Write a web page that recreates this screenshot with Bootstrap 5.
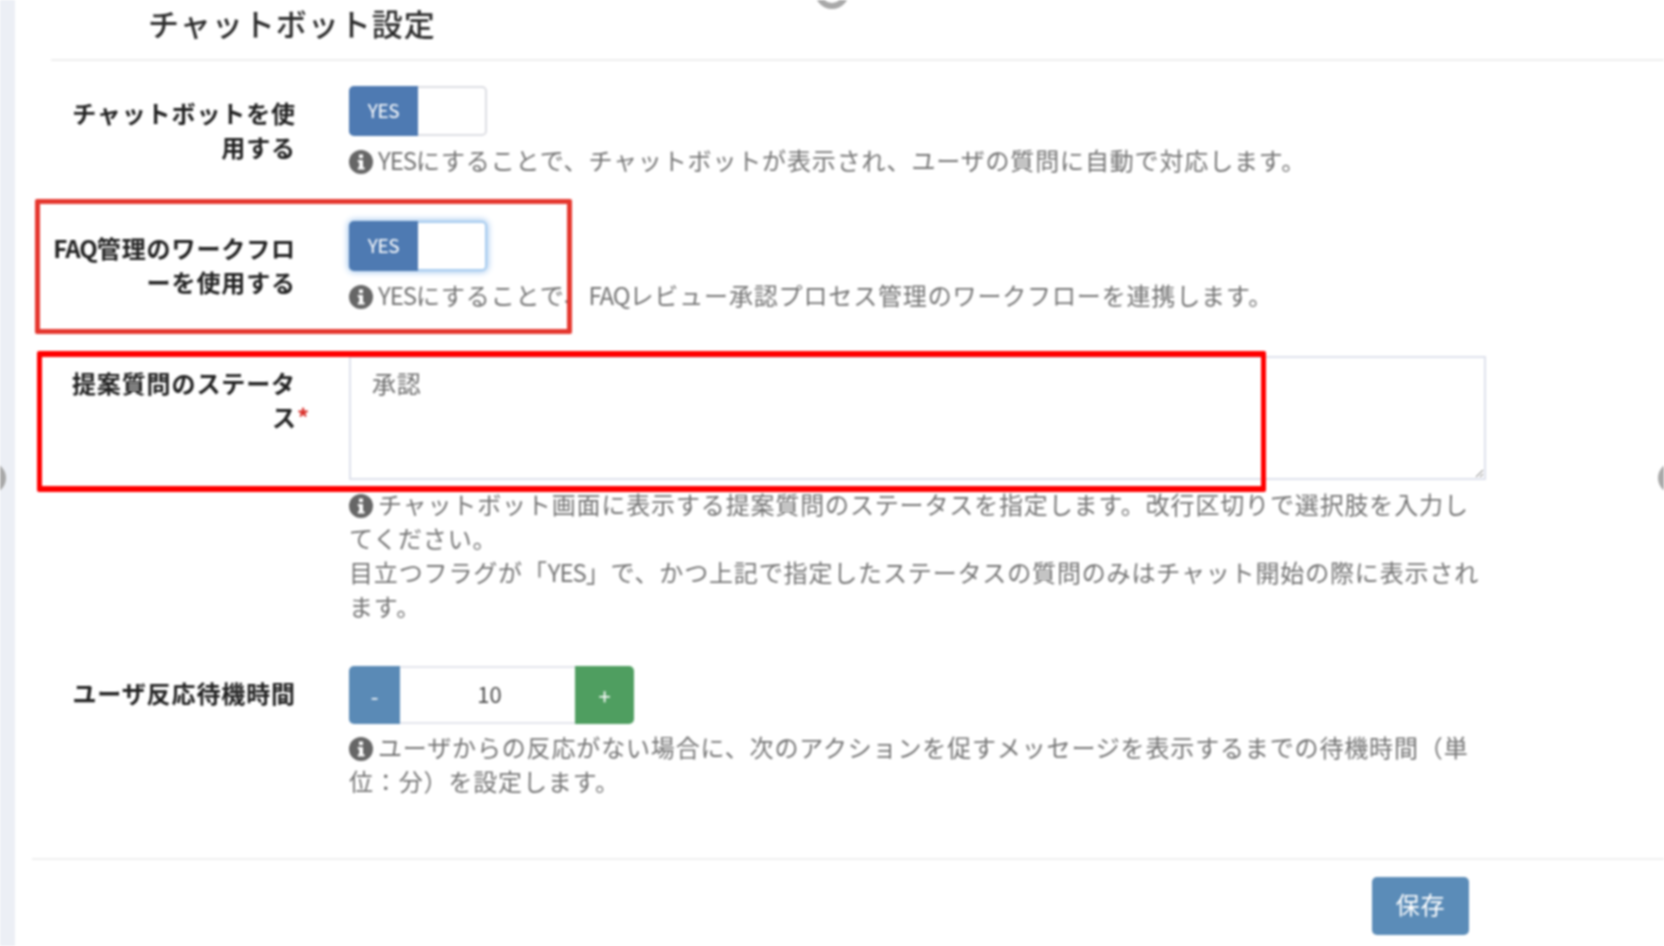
<!DOCTYPE html>
<html lang="ja">
<head>
<meta charset="utf-8">
<title>チャットボット設定</title>
<link href="https://cdn.jsdelivr.net/npm/bootstrap@5.3.0/dist/css/bootstrap.min.css" rel="stylesheet">
<style>
html,body{height:100%;overflow:hidden;background:#fff}
body{font-family:"Noto Sans CJK JP","Noto Sans",sans-serif;font-size:24px;line-height:34px;color:#333}
.stage{position:relative;width:1664px;height:946px;overflow:hidden;filter:blur(.9px);padding-left:15px;background:linear-gradient(90deg,#eceff5 15px,#fff 15px)}
.head-block{height:61px;margin-left:36px;border-bottom:2px solid #eeeeee;padding-left:97px;padding-top:6px}
.head-title{font-size:31px;line-height:34px;letter-spacing:1px;font-weight:500;color:#2c2c2c;margin:0}
.form-area{padding-top:25px}
.frow{margin-bottom:44px}
.frow-tight{margin-bottom:43px}
.flabel{flex:0 0 334px;width:334px;padding:10px 53px 0 0;text-align:right;font-weight:700;letter-spacing:.9px;margin:0;color:#222;white-space:nowrap}
.faq-latin{letter-spacing:-1px}
.req{color:#d9312c;display:inline-block;margin-right:-14px}
.fbody{flex:0 0 1137px;width:1137px}
.sw{width:138px;height:50px;border:2px solid #dddee3;border-radius:5px;background:#fff}
.sw-on{flex:0 0 69px;margin:-2px 0 -2px -2px;border-radius:5px 0 0 5px;background:#4e7ab2;color:#fff;font-size:19px;line-height:48px;text-align:center;letter-spacing:-.3px}
.sw-focus{box-shadow:0 0 6px 1px #9cc3ec;border-color:#a9cdf0}
.hint{color:#747474;letter-spacing:.85px;margin-top:7px}
.stepper + .hint{margin-top:6px}
.hint svg{width:24px;height:24px;vertical-align:-4px;margin-right:5px}
.lat{letter-spacing:-1.1px}
.qarea{display:block;width:1137px;height:124px;padding:8px 21px;border:2px solid #dfe2ec;border-radius:0;color:#6c6c6c;font-size:24px;line-height:34px;letter-spacing:.7px;font-family:inherit}
.qarea:focus{outline:0;box-shadow:none;border-color:#dfe2ec}
.stepper{width:285px;height:58px}
.stepper-btn{flex:0 0 51px;border:0;border-radius:5px 0 0 5px;color:#fff;font-size:22px;line-height:54px;padding:0;background:#5a8ab6}
.stepper-plus{flex:0 0 59px;border-radius:0 5px 5px 0;background:#4f9e60}
.stepper-val{flex:1 1 auto;border-top:2px solid #e4e5ec;border-bottom:2px solid #e4e5ec;color:#4c4c4c;text-align:center;font-size:22px;line-height:51px;padding-left:4px}
.foot-block{position:absolute;left:32px;right:0;top:858px;border-top:2px solid #f0f0f0;padding:17px 195px 0 0}
.save-btn{width:97px;height:58px;padding:0 0 4px;background:#5b8cb8;border:0;border-radius:5px;color:#fff;font-size:24px;letter-spacing:.7px;line-height:50px}
.redbox{position:absolute;pointer-events:none;border-radius:2px}
.redbox-a{left:35px;top:199px;width:537px;height:135px;border:5px solid #e5372f}
.redbox-b{left:37px;top:351px;width:1229px;height:141px;border:6px solid #f00;border-left-width:5px;border-right-width:5px}
.dot{position:absolute;width:32px;height:32px;border-radius:50%;background:#a8a8a8}
.dot-l{left:-26px;top:462px}
.dot-r{left:1658px;top:462px}
.dot-t{left:815px;top:-25px;width:34px;height:34px;background:transparent;border:6px solid #a8a8a8}
</style>
</head>
<body>
<div class="stage">
  <div class="head-block"><h4 class="head-title">チャットボット設定</h4></div>
  <form class="form-area">
    <div class="d-flex frow">
      <label class="flabel">チャットボットを使<br>用する</label>
      <div class="fbody">
        <div class="sw d-flex"><div class="sw-on">YES</div></div>
        <div class="hint"><svg viewBox="0 0 24 24"><circle cx="12" cy="12" r="12" fill="#666"/><rect x="10" y="4.5" width="4" height="3.6" fill="#fff"/><path d="M8.8 10h5.2v7.2h1.6v2.3H8.8v-2.3h1.4v-5H8.8z" fill="#fff"/></svg><span class="lat">YES</span>にすることで、チャットボットが表示され、ユーザの質問に自動で対応します。</div>
      </div>
    </div>
    <div class="d-flex frow">
      <label class="flabel"><span class="faq-latin">FAQ</span>管理のワークフロ<br>ーを使用する</label>
      <div class="fbody">
        <div class="sw sw-focus d-flex"><div class="sw-on">YES</div></div>
        <div class="hint"><svg viewBox="0 0 24 24"><circle cx="12" cy="12" r="12" fill="#666"/><rect x="10" y="4.5" width="4" height="3.6" fill="#fff"/><path d="M8.8 10h5.2v7.2h1.6v2.3H8.8v-2.3h1.4v-5H8.8z" fill="#fff"/></svg><span class="lat">YES</span>にすることで、<span class="lat">FAQ</span>レビュー承認プロセス管理のワークフローを連携します。</div>
      </div>
    </div>
    <div class="d-flex frow frow-tight">
      <label class="flabel">提案質問のステータ<br>ス<span class="req">*</span></label>
      <div class="fbody">
        <textarea class="qarea" rows="3">承認</textarea>
        <div class="hint"><svg viewBox="0 0 24 24"><circle cx="12" cy="12" r="12" fill="#666"/><rect x="10" y="4.5" width="4" height="3.6" fill="#fff"/><path d="M8.8 10h5.2v7.2h1.6v2.3H8.8v-2.3h1.4v-5H8.8z" fill="#fff"/></svg>チャットボット画面に表示する提案質問のステータスを指定します。改行区切りで選択肢を入力し<br>てください。<br>目立つフラグが「<span class="lat">YES</span>」で、かつ上記で指定したステータスの質問のみはチャット開始の際に表示され<br>ます。</div>
      </div>
    </div>
    <div class="d-flex frow">
      <label class="flabel">ユーザ反応待機時間</label>
      <div class="fbody">
        <div class="stepper d-flex">
          <button type="button" class="stepper-btn">-</button>
          <div class="stepper-val">10</div>
          <button type="button" class="stepper-btn stepper-plus">+</button>
        </div>
        <div class="hint"><svg viewBox="0 0 24 24"><circle cx="12" cy="12" r="12" fill="#666"/><rect x="10" y="4.5" width="4" height="3.6" fill="#fff"/><path d="M8.8 10h5.2v7.2h1.6v2.3H8.8v-2.3h1.4v-5H8.8z" fill="#fff"/></svg>ユーザからの反応がない場合に、次のアクションを促すメッセージを表示するまでの待機時間（単<br>位：分）を設定します。</div>
      </div>
    </div>
  </form>
  <div class="foot-block d-flex justify-content-end"><button type="button" class="btn save-btn">保存</button></div>
  <div class="redbox redbox-a"></div>
  <div class="redbox redbox-b"></div>
  <div class="dot dot-l"></div>
  <div class="dot dot-r"></div>
  <div class="dot dot-t"></div>
</div>
<script src="https://cdn.jsdelivr.net/npm/bootstrap@5.3.0/dist/js/bootstrap.bundle.min.js"></script>
</body>
</html>
